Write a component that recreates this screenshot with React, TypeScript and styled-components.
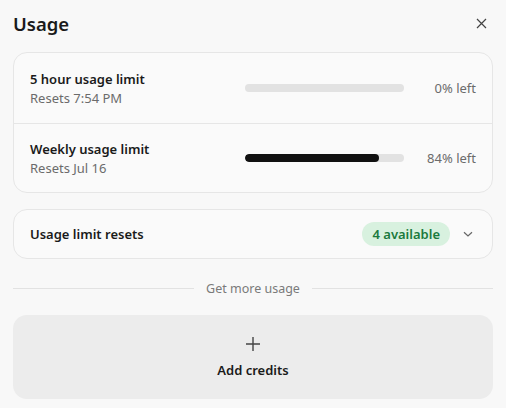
import styled, { createGlobalStyle } from "styled-components";

const GlobalStyle = createGlobalStyle`
    html, body {
        margin: 0;
        padding: 0;
        background: #f8f8f8;
    }
    body {
        font-family: "Noto Sans", "Open Sans", sans-serif;
        color: #1a1a1a;
    }
`;

const Panel = styled.div`
    width: 506px;
    height: 408px;
    box-sizing: border-box;
    padding: 10px 13px 0 13px;
    display: flex;
    flex-direction: column;
`;

const Header = styled.header`
    display: flex;
    justify-content: space-between;
    align-items: center;
    height: 26px;
    margin-bottom: 16px;
`;

const Title = styled.h1`
    margin: 0;
    font-size: 18.5px;
    font-weight: 600;
    color: #1a1a1a;
`;

const CloseButton = styled.button`
    border: none;
    background: none;
    padding: 0;
    margin-right: 4px;
    width: 16px;
    height: 16px;
    display: flex;
    align-items: center;
    justify-content: center;
    color: #444;
`;

const Card = styled.div`
    border: 1px solid #e6e6e6;
    border-radius: 14px;
    background: #fafafa;
`;

const LimitRow = styled.div<{ $divider?: boolean }>`
    display: flex;
    align-items: center;
    height: 68px;
    padding: 0 16px;
    border-top: ${(p) => (p.$divider ? "1px solid #e6e6e6" : "none")};
    &:first-child {
        height: 70px;
    }
`;

const LimitText = styled.div`
    flex: 1;
    display: flex;
    flex-direction: column;
    gap: 1px;
`;

const RowTitle = styled.div`
    font-size: 13px;
    font-weight: 600;
    color: #1a1a1a;
`;

const RowSub = styled.div`
    font-size: 13px;
    color: #6b6b6b;
`;

const Track = styled.div`
    width: 159px;
    height: 8px;
    border-radius: 4px;
    background: #e2e2e2;
    overflow: hidden;
`;

const Fill = styled.div`
    height: 100%;
    border-radius: 4px;
    background: #111;
`;

const Percent = styled.div`
    width: 72px;
    text-align: right;
    font-size: 13px;
    color: #6b6b6b;
`;

const ResetsCard = styled(Card)`
    margin-top: 16px;
    height: 48px;
    display: flex;
    align-items: center;
    padding: 0 16px;
`;

const Spacer = styled.div`
    flex: 1;
`;

const Badge = styled.span`
    background: #d8f1df;
    color: #1b7a3d;
    font-size: 13px;
    font-weight: 600;
    border-radius: 12px;
    padding: 3px 10px;
    line-height: 18px;
`;

const Chevron = styled.span`
    display: flex;
    margin-left: 12px;
    margin-right: 2px;
    color: #666;
`;

const Separator = styled.div`
    display: flex;
    align-items: center;
    gap: 12px;
    margin-top: 21px;
    font-size: 12.5px;
    color: #7a7a7a;
    &::before,
    &::after {
        content: "";
        flex: 1;
        height: 1px;
        background: #e2e2e2;
    }
`;

const AddButton = styled.button`
    margin-top: 18px;
    height: 84px;
    border: none;
    border-radius: 14px;
    background: #ececec;
    display: flex;
    flex-direction: column;
    align-items: center;
    justify-content: center;
    gap: 9px;
    font-family: inherit;
    font-size: 13px;
    font-weight: 600;
    color: #1a1a1a;
`;

const limits = [
    { title: "5 hour usage limit", reset: "Resets 7:54 PM", left: 0 },
    { title: "Weekly usage limit", reset: "Resets Jul 16", left: 84 },
];

function App() {
    return (
        <>
            <GlobalStyle />
            <Panel>
                <Header>
                    <Title>Usage</Title>
                    <CloseButton aria-label="Close">
                        <svg width="11" height="11" viewBox="0 0 11 11">
                            <path d="M1 1L10 10M10 1L1 10" stroke="currentColor" strokeWidth="1.2" />
                        </svg>
                    </CloseButton>
                </Header>

                <Card>
                    {limits.map((l, i) => (
                        <LimitRow key={l.title} $divider={i > 0}>
                            <LimitText>
                                <RowTitle>{l.title}</RowTitle>
                                <RowSub>{l.reset}</RowSub>
                            </LimitText>
                            <Track>
                                <Fill style={{ width: `${l.left}%` }} />
                            </Track>
                            <Percent>{l.left}% left</Percent>
                        </LimitRow>
                    ))}
                </Card>

                <ResetsCard>
                    <RowTitle>Usage limit resets</RowTitle>
                    <Spacer />
                    <Badge>4 available</Badge>
                    <Chevron>
                        <svg width="12" height="12" viewBox="0 0 12 12">
                            <path d="M2 4.2L6 8L10 4.2" fill="none" stroke="currentColor" strokeWidth="1.2" />
                        </svg>
                    </Chevron>
                </ResetsCard>

                <Separator>Get more usage</Separator>

                <AddButton>
                    <svg width="16" height="16" viewBox="0 0 16 16">
                        <path d="M8 1V15M1 8H15" stroke="#444" strokeWidth="1.4" />
                    </svg>
                    Add credits
                </AddButton>
            </Panel>
        </>
    );
}

export default App;
